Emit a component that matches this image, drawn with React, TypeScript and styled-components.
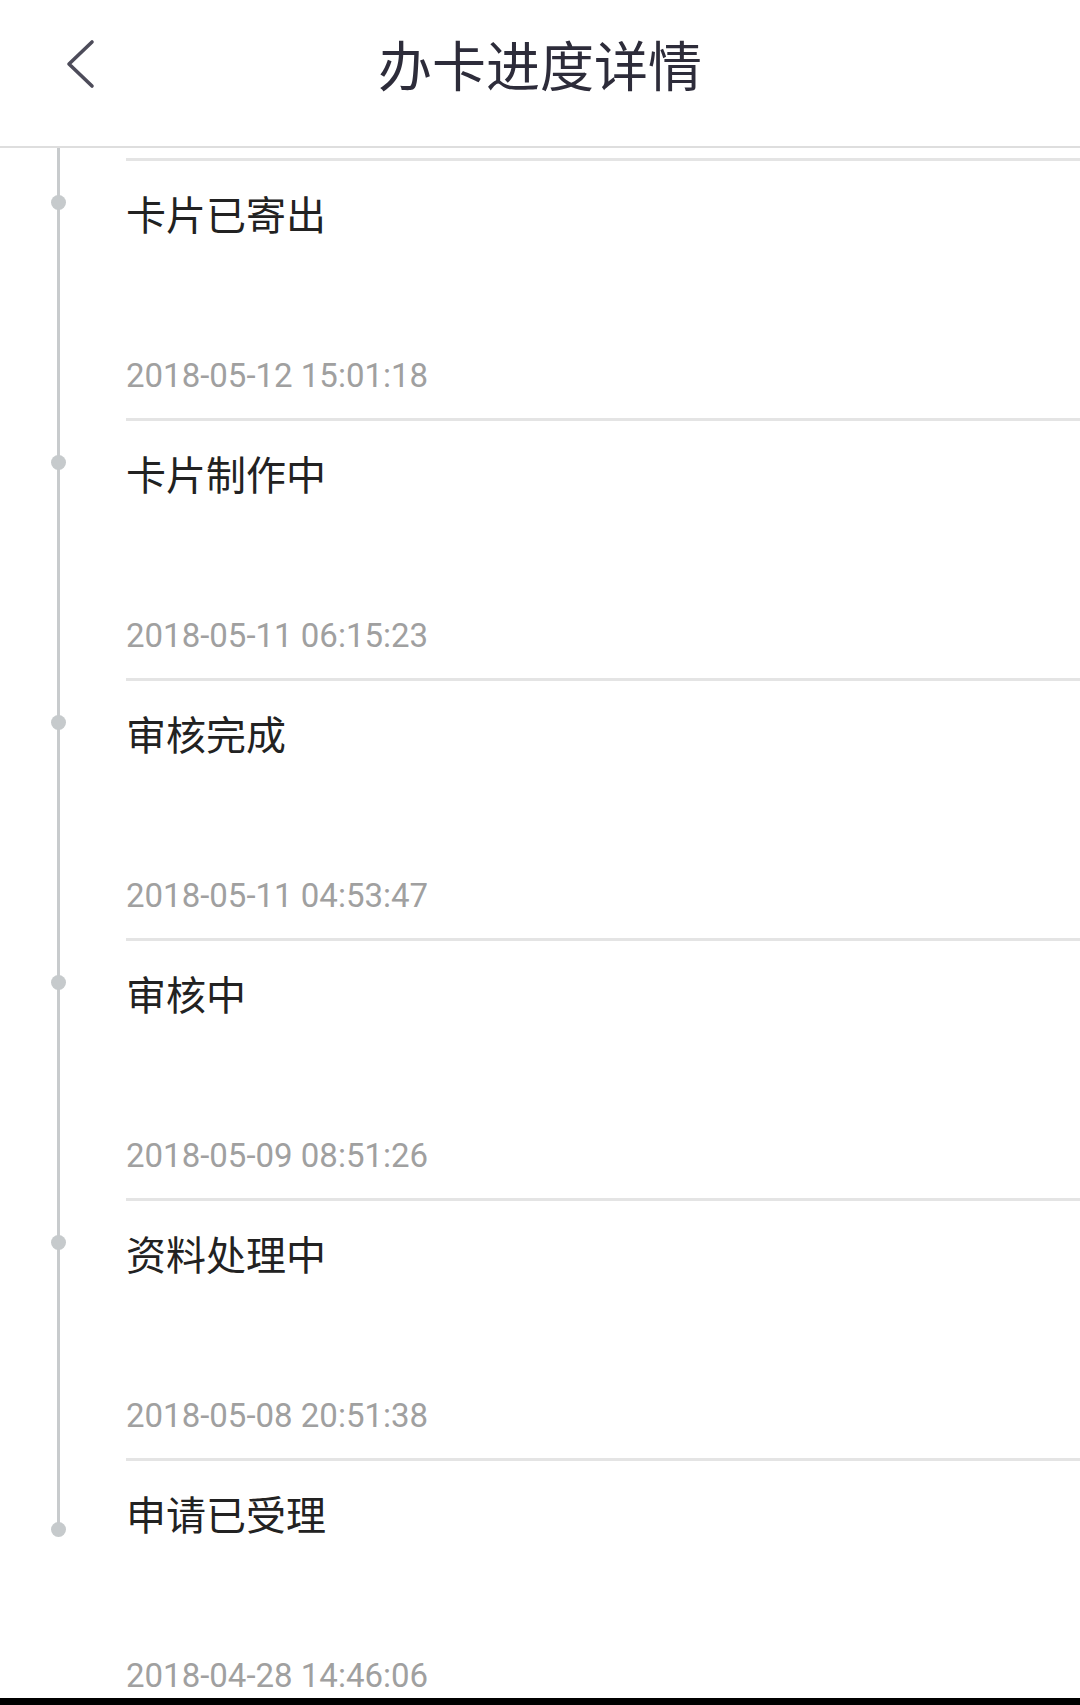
import styled, { createGlobalStyle } from "styled-components"

const GlobalStyle = createGlobalStyle`
    html, body {
        margin: 0;
        padding: 0;
        background: #fff;
    }
    body {
        font-family: "Noto Sans CJK SC", "Noto Sans", sans-serif;
    }
`

const steps = [
    { title: "卡片已寄出", time: "2018-05-12 15:01:18" },
    { title: "卡片制作中", time: "2018-05-11 06:15:23" },
    { title: "审核完成", time: "2018-05-11 04:53:47" },
    { title: "审核中", time: "2018-05-09 08:51:26" },
    { title: "资料处理中", time: "2018-05-08 20:51:38" },
    { title: "申请已受理", time: "2018-04-28 14:46:06" },
]

function App(){
    return(
        <Page>
            <GlobalStyle />
            <Header>
                <BackButton aria-label="返回">
                    <svg width="32" height="52" viewBox="0 0 32 52" fill="none">
                        <polyline points="27,4 4,26 27,48" stroke="#4d4c5a" strokeWidth="3.6" strokeLinecap="round" strokeLinejoin="round" />
                    </svg>
                </BackButton>
                <Title>办卡进度详情</Title>
                <span />
            </Header>
            <List>
                {steps.map((s, i) => (
                    <Item key={s.time}>
                        <Rail $last={i === steps.length - 1}>
                            <Dot $last={i === steps.length - 1} />
                        </Rail>
                        <Body>
                            <StepTitle>{s.title}</StepTitle>
                            <StepTime>{s.time}</StepTime>
                        </Body>
                    </Item>
                ))}
            </List>
            <NavEdge />
        </Page>
    )
}

export default App

const Page = styled.div`
    width: 1080px;
    min-height: 1705px;
    background: #fff;
    overflow: hidden;
`

const Header = styled.header`
    height: 148px;
    box-sizing: border-box;
    border-bottom: 2px solid #dedede;
    display: grid;
    grid-template-columns: 1fr auto 1fr;
    align-items: start;
    padding-top: 37px;
`

const BackButton = styled.button`
    justify-self: start;
    margin: 1px 0 0 65px;
    padding: 0;
    border: none;
    background: none;
    display: flex;
`

const Title = styled.h1`
    margin: 0;
    font-size: 54px;
    line-height: 54px;
    font-weight: 400;
    color: #2d2c3a;
`

const List = styled.div`
    position: relative;
    padding-top: 10px;

    &::before{
        content: "";
        position: absolute;
        left: 57px;
        top: 0;
        width: 3px;
        height: 10px;
        background: #c8cbcd;
    }
`

const Item = styled.div`
    display: flex;
`

const Rail = styled.div<{ $last?: boolean }>`
    position: relative;
    width: 126px;
    flex-shrink: 0;

    &::before{
        content: "";
        position: absolute;
        left: 57px;
        top: 0;
        width: 3px;
        height: ${p => p.$last ? "71px" : "100%"};
        background: #c8cbcd;
    }
`

const Dot = styled.span<{ $last?: boolean }>`
    position: absolute;
    left: 51px;
    top: ${p => p.$last ? "64px" : "37px"};
    width: 15px;
    height: 15px;
    border-radius: 50%;
    background: #c6cacc;
`

const Body = styled.div`
    flex: 1;
    border-top: 3px solid #e4e4e4;
    padding: 32px 0 25px;
    display: flex;
    flex-direction: column;
`

const StepTitle = styled.div`
    font-size: 40px;
    line-height: 40px;
    color: #222;
`

const StepTime = styled.div`
    margin-top: 126px;
    font-family: Roboto, "Liberation Sans", sans-serif;
    font-size: 33px;
    line-height: 34px;
    color: #a0a0a0;
`

const NavEdge = styled.div`
    position: fixed;
    left: 0;
    right: 0;
    bottom: 0;
    height: 7px;
    background: #000;
`
